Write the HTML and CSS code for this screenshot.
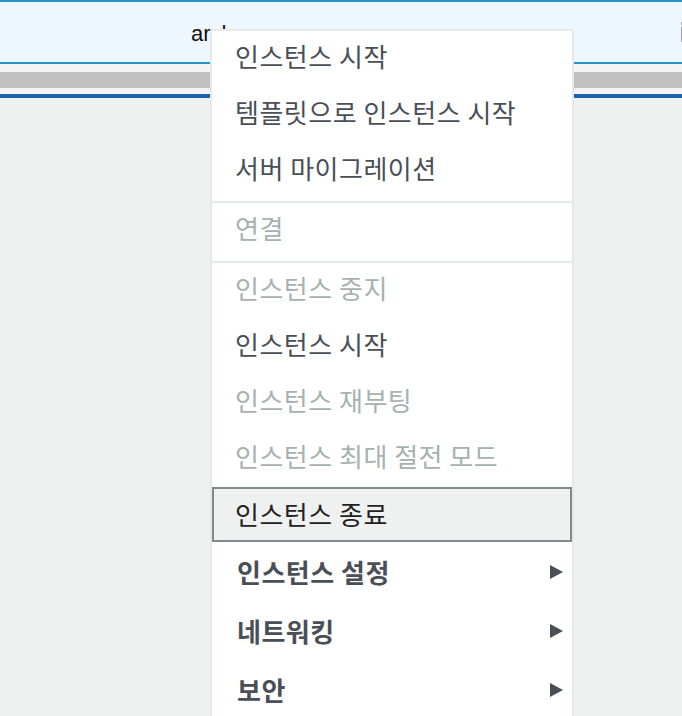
FILE: index.html
```html
<!DOCTYPE html>
<html>
	<head>
		<meta charset="utf-8">
		<title>인스턴스</title>
		<link rel="stylesheet" href="styles.css">
	</head>
	<body>
		<div class="top">
			<div class="search"><span class="query">arch s</span><span class="link">i</span></div>
			<div class="strip"></div>
			<div class="bar"></div>
		</div>
		<ul class="menu">
			<li class="item">인스턴스 시작</li>
			<li class="item">템플릿으로 인스턴스 시작</li>
			<li class="item">서버 마이그레이션</li>
			<li class="line"></li>
			<li class="item off">연결</li>
			<li class="line"></li>
			<li class="item off">인스턴스 중지</li>
			<li class="item">인스턴스 시작</li>
			<li class="item off">인스턴스 재부팅</li>
			<li class="item off">인스턴스 최대 절전 모드</li>
			<li class="item on">인스턴스 종료</li>
			<li class="item sub">인스턴스 설정</li>
			<li class="item sub">네트워킹</li>
			<li class="item sub">보안</li>
		</ul>
	</body>
</html>
```

FILE: styles.css
```css
* {margin: 0;padding: 0;list-style: none;box-sizing: border-box;}
html,body {width: 100%;height: 100%;overflow: hidden;}
body {background: #eff1f0;font-family: "Noto Sans CJK KR", "Liberation Sans", sans-serif;position: relative;}
.search {height: 64px;background: #eef7fe;border-top: 2px solid #2596c1;border-bottom: 2px solid #2596c1;
	display: flex;align-items: flex-start;justify-content: space-between;padding: 18px 0 0 191px;}
.query {font-family: "Liberation Sans", sans-serif;font-size: 22px;color: #111;line-height: 28px;}
.link {font-family: "Liberation Sans", sans-serif;font-size: 27px;font-weight: bold;color: #1e63ad;line-height: 28px;margin: -1px -5px 0 0;}
.strip {height: 30px;background: #c0c0c0;border-top: 8px solid #f4f4f4;border-bottom: 6px solid #f4f4f4;}
.bar {height: 4px;background: #1e63ad;}
.menu {position: absolute;left: 210px;top: 29px;width: 364px;height: 700px;background: #fff;
	border: 2px solid #e4e8e7;border-bottom: none;border-radius: 3px 3px 0 0;}
.menu .item {height: 56px;line-height: 50px;padding-left: 23px;font-size: 26px;letter-spacing: 0.5px;color: #4a4f57;position: relative;white-space: nowrap;}
.menu .off {color: #a6b1b0;}
.menu .line {height: 2px;background: #e4e8e7;margin: 2px 0 0;border-radius: 1px;}
.menu .on {height: 55px;line-height: 49px;background: #eff1f0;border: 2px solid #7f8c8b;padding-left: 21px;color: #222;}
.menu .sub {height: 59px;line-height: 60px;font-weight: bold;padding-left: 25px;}
.menu .sub::after {content: "";position: absolute;right: 9px;top: 23px;border-left: 13px solid #4a4f57;
	border-top: 7px solid transparent;border-bottom: 7px solid transparent;}
```
